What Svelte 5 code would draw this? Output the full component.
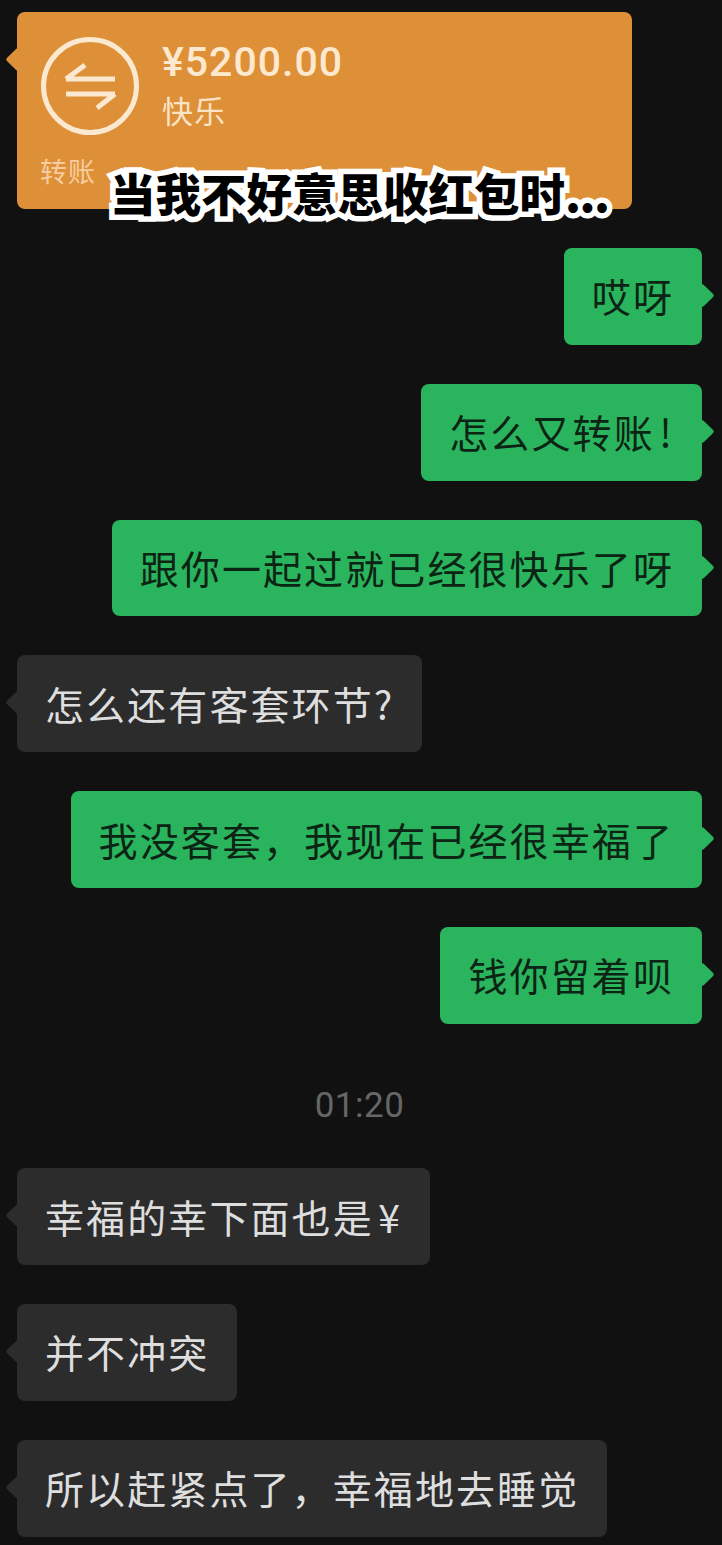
<script>
  // chat rows after the transfer card, top to bottom
  const before = [
    { side: 'me', text: '哎呀' },
    { side: 'me', text: '怎么又转账\u200a!' },
    { side: 'me', text: '跟你一起过就已经很快乐了呀' },
    { side: 'them', text: '怎么还有客套环节?' },
    { side: 'me', text: '我没客套，我现在已经很幸福了' },
    { side: 'me', text: '钱你留着呗' }
  ];
  const after = [
    { side: 'them', text: '幸福的幸下面也是\u200a¥' },
    { side: 'them', text: '并不冲突' },
    { side: 'them', text: '所以赶紧点了，幸福地去睡觉' }
  ];
</script>

<div class="chat">
  <div class="row them">
    <div class="transfer">
      <div class="transfer-main">
        <svg class="transfer-icon" viewBox="0 0 98 98" aria-hidden="true">
          <circle cx="49" cy="49" r="46.5" />
          <path d="M25 42H74M25 42L44 28" />
          <path d="M25 57H74M74 57L56 71" />
        </svg>
        <div class="transfer-text">
          <div class="amount">¥5200.00</div>
          <div class="note">快乐</div>
        </div>
      </div>
      <div class="transfer-label">转账</div>
    </div>
  </div>

  {#each before as msg}
    <div class="row {msg.side}"><div class="bubble">{msg.text}</div></div>
  {/each}

  <div class="time">01:20</div>

  {#each after as msg}
    <div class="row {msg.side}"><div class="bubble">{msg.text}</div></div>
  {/each}

  <div class="caption">当我不好意思收红包时<span class="dots">...</span></div>
</div>

<style>
  :global(body) {
    margin: 0;
    background: #111112;
  }

  .chat {
    position: relative;
    box-sizing: border-box;
    width: 722px;
    height: 1545px;
    padding: 12px 20px 0 17px;
    display: flex;
    flex-direction: column;
    gap: 39px;
    background: #111112;
    font-family: "Noto Sans CJK SC", "Noto Sans", sans-serif;
    overflow: hidden;
  }

  .row {
    display: flex;
  }

  .row.me {
    justify-content: flex-end;
  }

  .bubble,
  .transfer {
    position: relative;
    border-radius: 8px;
  }

  .bubble {
    box-sizing: border-box;
    height: 96.8px;
    padding: 0 28px 2px;
    display: flex;
    align-items: center;
    font-size: 39px;
    letter-spacing: 2.1px;
    white-space: nowrap;
  }

  .them .bubble {
    background: #2c2c2d;
    color: #dedede;
  }

  .me .bubble {
    background: #2bb45e;
    color: #0c2414;
  }

  .bubble::after,
  .transfer::after {
    content: "";
    position: absolute;
    top: 39px;
    width: 17px;
    height: 17px;
    border-radius: 2px;
    transform: rotate(45deg);
    background: inherit;
  }

  .them .bubble::after,
  .transfer::after {
    left: -8.5px;
  }

  .me .bubble::after {
    right: -8.5px;
  }

  .transfer {
    box-sizing: border-box;
    width: 615px;
    height: 197px;
    padding: 25px 24px 0;
    background: #de9038;
  }

  .transfer-main {
    display: flex;
    gap: 23px;
  }

  .transfer-icon {
    width: 98px;
    height: 98px;
    flex: none;
    fill: none;
    stroke: #fbe8d0;
    stroke-width: 5;
  }

  .transfer-text {
    margin-top: 1px;
  }

  .amount {
    font-family: Roboto, sans-serif;
    font-size: 41px;
    font-weight: 500;
    line-height: 48px;
    letter-spacing: 1px;
    color: #fde9cf;
  }

  .note {
    margin-top: 2px;
    font-size: 31px;
    line-height: 44px;
    letter-spacing: 1px;
    color: #fbe3c6;
  }

  .transfer-label {
    margin-top: 16px;
    margin-left: -1px;
    font-size: 27px;
    line-height: 40px;
    letter-spacing: 1px;
    color: #f6cd9f;
  }

  .time {
    margin: 23px 0 3.5px;
    text-align: center;
    font-family: Roboto, sans-serif;
    font-size: 35px;
    line-height: 40px;
    letter-spacing: 0.5px;
    color: #666;
  }

  .caption {
    position: absolute;
    left: 110px;
    top: 157px;
    font-size: 45.5px;
    line-height: 70px;
    font-weight: 900;
    white-space: nowrap;
    color: #000;
    -webkit-text-stroke: 11px #fff;
    paint-order: stroke fill;
  }

  .dots {
    letter-spacing: -1.5px;
  }
</style>
